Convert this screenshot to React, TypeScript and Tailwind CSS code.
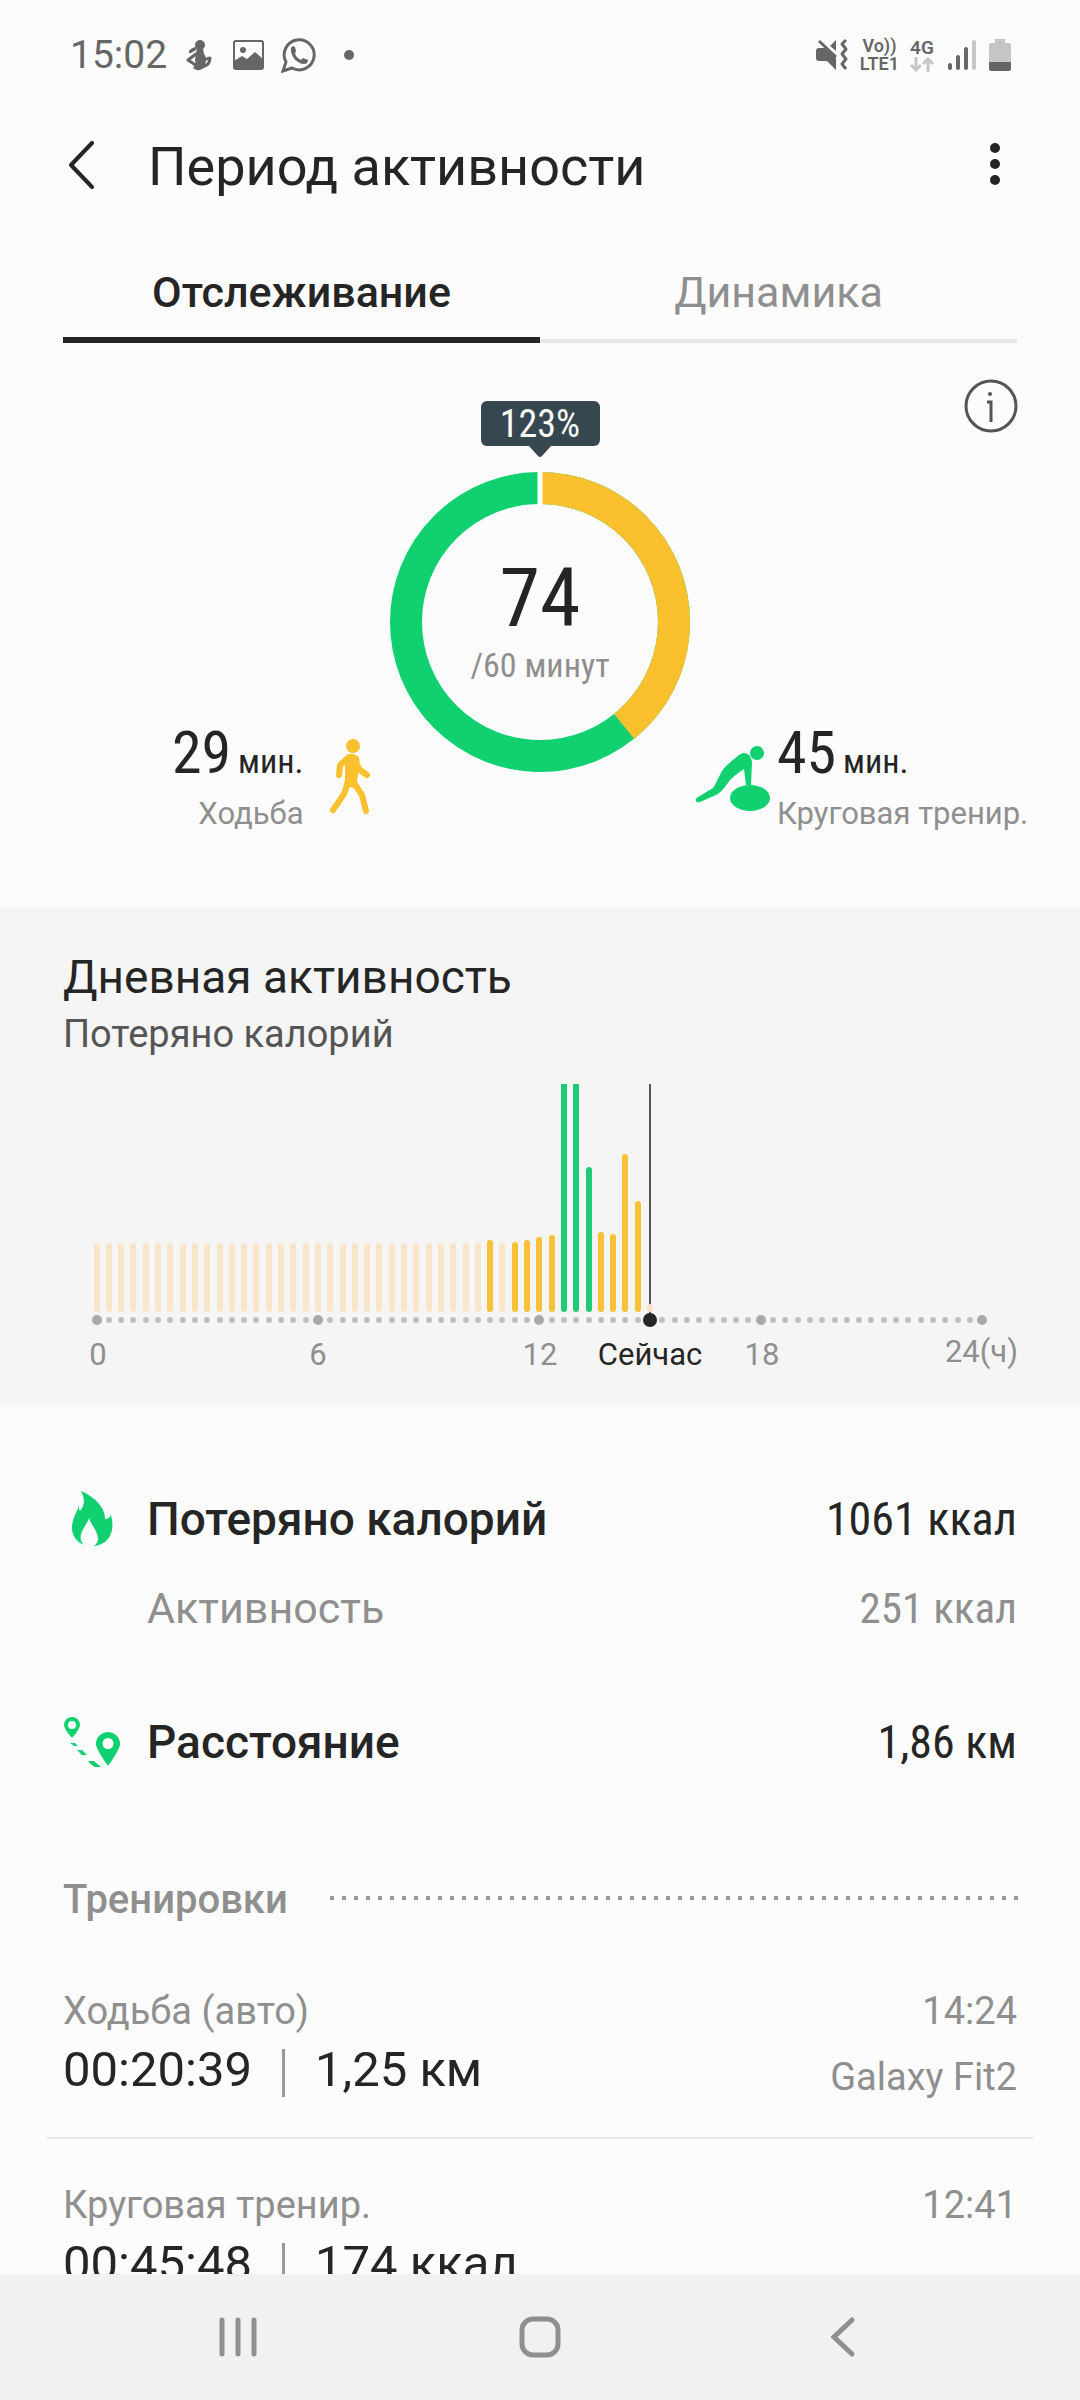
const GREEN = "#10d070";
const YELLOW = "#fbc02d";

// 20 minute slots with activity: bar top and colour
const activeBars: Record<number, [number, string]> = {
  32: [156, "#f8c138"],
  34: [158, "#f8c138"],
  35: [156, "#f8c138"],
  36: [153, "#f8c138"],
  37: [151, "#f8c138"],
  38: [0, "#1ecb74"],
  39: [0, "#1ecb74"],
  40: [83, "#1ecb74"],
  41: [148, "#f8c138"],
  42: [150, "#f8c138"],
  43: [70, "#f8c138"],
  44: [117, "#f8c138"],
};

const NOW = 45;
const slotX = (i: number) => Math.floor(97 + i * 12.3);

const workouts = [
  { name: "Ходьба (авто)", time: "14:24", duration: "00:20:39", value: "1,25 км", device: "Galaxy Fit2" },
  { name: "Круговая тренир.", time: "12:41", duration: "00:45:48", value: "174 ккал", device: "" },
];

function StatusBar() {
  return (
    <div className="flex h-[110px] shrink-0 items-center justify-between pl-[70px] pr-[69px] text-[#666]">
      <div className="flex items-center">
        <span className="text-[39px] leading-[48px]">15:02</span>
        <svg className="ml-[19px]" width="27" height="32" viewBox="0 0 27 32">
          <g fill="currentColor">
            <circle cx="14" cy="6" r="5" />
            <path d="M3 12q3-4 8-4l-1 3-5 3q-3 0-2-2z" />
            <path d="M11 9h6l1 6c3 3 2 8 1 11-1 5-8 7-12 3 2-2 3-5 2-8l1-7z" />
          </g>
          <path d="M10 15l-8 6 9 6M16 28c5-1 8-4 8-9l-3 1" fill="none" stroke="currentColor" strokeWidth="3" strokeLinecap="round" strokeLinejoin="round" />
        </svg>
        <svg className="ml-[20px]" width="31" height="30" viewBox="0 0 31 30">
          <rect x="1" y="1" width="29" height="28" rx="2" fill="none" stroke="currentColor" strokeWidth="2" />
          <circle cx="10" cy="10" r="3" fill="currentColor" />
          <path d="M1 21l8-5 5 3 8-7 8 7v10H1z" fill="currentColor" />
        </svg>
        <svg className="ml-[17px]" width="36" height="36" viewBox="0 0 36 36">
          <path d="M2 34l3-9a15 15 0 1 1 6 6z" fill="none" stroke="currentColor" strokeWidth="3" />
          <path d="M10 11c1-2 3-2 4-1l1 4-1 3c1 3 4 5 6 6l2-2 5 2c0 3-2 4-4 4-6 0-14-7-13-16z" fill="currentColor" />
        </svg>
        <span className="ml-[27px] size-[10px] rounded-full bg-[#666]" />
      </div>
      <div className="flex items-center">
        <svg width="34" height="34" viewBox="0 0 34 34">
          <path d="M3 10h6l11 10v12l-9-9H3q-3 0-3-3v-7q0-3 3-3zM14 8l6-6v11z" fill="currentColor" />
          <path d="M3 3l17 16" stroke="currentColor" strokeWidth="3" />
          <path d="M30 2l-4 4 4 5-4 5 4 5-4 5 4 5" fill="none" stroke="currentColor" strokeWidth="3" strokeLinejoin="round" />
        </svg>
        <div className="ml-[10px] text-center text-[18px] leading-[18px] font-semibold">
          <div>Vo))</div>
          <div>LTE1</div>
        </div>
        <div className="ml-[11px] flex flex-col items-center text-[19px] leading-[19px] font-semibold">
          4G
          <svg width="24" height="16" viewBox="0 0 24 16" fill="none" stroke="#c6c6c6" strokeWidth="3">
            <path d="M6 0v13M1 8l5 5 5-5M18 15V2M13 7l5-5 5 5" />
          </svg>
        </div>
        <svg className="ml-[14px]" width="28" height="32" viewBox="0 0 28 32" strokeWidth="4" strokeLinecap="round" stroke="currentColor">
          <path d="M2 26v3M10 18v11M18 10v19" />
          <path d="M26 3v26" stroke="#c6c6c6" />
        </svg>
        <svg className="ml-[13px]" width="22" height="34" viewBox="0 0 22 34">
          <path d="M6 1h10v4h4q2 0 2 2v17H0V7q0-2 2-2h4z" fill="#c6c6c6" />
          <path d="M0 24h22v7q0 2-2 2H2q-2 0-2-2z" fill="currentColor" />
        </svg>
      </div>
    </div>
  );
}

function ActivityRing() {
  const r = 134;
  const length = 2 * Math.PI * r;
  return (
    <svg width="300" height="300" viewBox="0 0 300 300" fill="none" strokeWidth="32">
      <circle cx="150" cy="150" r={r} stroke={GREEN} />
      <circle
        cx="150"
        cy="150"
        r={r}
        stroke={YELLOW}
        strokeDasharray={`${(length * 29) / 74} ${length}`}
        transform="rotate(-90 150 150)"
      />
      <path d="M150 0v34" stroke="#fcfcfc" strokeWidth="5" />
    </svg>
  );
}

function WalkIcon() {
  return (
    <svg className="mt-[20px] ml-[26px]" width="40" height="76" viewBox="0 0 40 76" fill={YELLOW}>
      <circle cx="23" cy="7" r="7" />
      <path d="M15 18q7-6 14 0 1 7 0 12l-2 12 2 8-9-2-7 2 2-10V28z" />
      <path d="M19 18l-9 8-1 10M27 26l3 5 7 5M18 44l-4 11L3 71M24 44l8 12 4 16" fill="none" stroke={YELLOW} strokeWidth="6" strokeLinecap="round" strokeLinejoin="round" />
    </svg>
  );
}

function CircuitIcon() {
  return (
    <svg className="mt-[26px] mr-[7px]" width="74" height="68" viewBox="0 0 74 68" fill={GREEN}>
      <circle cx="61" cy="8" r="7" />
      <path d="M2 52l15-9c2-2 4-8 9-17q3-5 17-16 5-4 10 0 3 3 3 7l-1 23h-5l-2-16q-9 6-14 11c-5 7-8 11-12 14L4 57q-3 1-4-1-1-2 2-4z" />
      <ellipse cx="54" cy="53" rx="20" ry="13" />
    </svg>
  );
}

function CaloriesChart() {
  return (
    <svg className="block w-full" viewBox="0 0 1080 300" role="img" aria-label="Потеряно калорий">
      {Array.from({ length: NOW }, (_, i) => {
        const [top, color] = activeBars[i] ?? [159, "#f9e5ca"];
        const x = slotX(i) - 3;
        return top === 0 ? (
          <path key={i} d={`M${x} 0h6v225a3 3 0 0 1-6 0z`} fill={color} />
        ) : (
          <rect key={i} x={x} y={top} width="6" height={228 - top} rx="3" fill={color} />
        );
      })}
      <path d={`M${slotX(NOW)} 0v236`} stroke="#555" strokeWidth="2" />
      <rect x={slotX(NOW) - 3} y="220" width="6" height="8" rx="3" fill="#fbe0cc" />
      {Array.from({ length: 73 }, (_, i) => (
        <circle key={i} cx={slotX(i)} cy="236" r={i % 18 === 0 ? 5 : 3} fill={i % 18 === 0 ? "#a9a9a9" : "#bfbfbf"} />
      ))}
      <circle cx={slotX(NOW)} cy="236" r="7" fill="#252525" />
      <g fontSize="31" fill="#8f8f8f" textAnchor="middle">
        <text x="98" y="281">0</text>
        <text x="318" y="281">6</text>
        <text x="540" y="281">12</text>
        <text x="650" y="281" fill="#252525">Сейчас</text>
        <text x="762" y="281">18</text>
        <text x="1018" y="278" textAnchor="end">24(ч)</text>
      </g>
    </svg>
  );
}

export default function App() {
  return (
    <div className="flex h-screen flex-col bg-[#fcfcfc] font-['Roboto',sans-serif] text-[#252525]">
      <StatusBar />

      <header className="flex h-[112px] shrink-0 items-center pl-[60px] pr-[79px]">
        <button aria-label="Назад" className="w-[88px]">
          <svg width="44" height="50" viewBox="0 0 44 50" fill="none" stroke="currentColor" strokeWidth="4" strokeLinecap="round" strokeLinejoin="round">
            <path d="M32 2L11 24l21 22" />
          </svg>
        </button>
        <h1 className="flex-1 pt-[2px] text-[54px] leading-[64px]">Период активности</h1>
        <button aria-label="Ещё">
          <svg width="12" height="48" viewBox="0 0 12 48" fill="currentColor">
            <circle cx="6" cy="6" r="5" />
            <circle cx="6" cy="22" r="5" />
            <circle cx="6" cy="38" r="5" />
          </svg>
        </button>
      </header>

      <main className="flex-1 overflow-hidden">
        <div role="tablist" className="mx-[63px] flex h-[121px] text-[43px]">
          <button role="tab" aria-selected="true" className="flex-1 border-b-6 border-[#252525] pt-[26px] font-medium">
            Отслеживание
          </button>
          <button role="tab" aria-selected="false" className="flex flex-1 flex-col">
            <span className="flex w-full flex-1 items-center justify-center pt-[24px] text-[#8f8f8f]">Динамика</span>
            <span className="h-[4px] w-full bg-[#e6e6e6]" />
          </button>
        </div>

        <section className="relative flex h-[564px] flex-col items-center pt-[58px]">
          <button aria-label="Информация" className="absolute top-[36px] right-[62px]">
            <svg width="54" height="54" viewBox="0 0 54 54" fill="none" stroke="#555" strokeWidth="3">
              <circle cx="27" cy="27" r="25" />
              <path d="M23 23h4v20" />
              <circle cx="26" cy="15" r="2" fill="#555" strokeWidth="0" />
            </svg>
          </button>
          <div className="flex h-[45px] w-[119px] items-center justify-center rounded-md bg-[#37474f] font-['Roboto_Condensed','Roboto',sans-serif] text-[38px] leading-[44px] text-[#fcfcfc]">
            123%
          </div>
          <svg width="22" height="11" viewBox="0 0 22 11" fill="#37474f">
            <path d="M0 0h22l-9 10q-2 2-4 0z" />
          </svg>
          <div className="relative mt-[15px]">
            <ActivityRing />
            <div className="absolute inset-0 flex flex-col items-center pt-[79px] font-['Roboto_Condensed','Roboto',sans-serif]">
              <span className="text-[82px] leading-[94px]">74</span>
              <span className="text-[34px] leading-[40px] text-[#8f8f8f]">/60 минут</span>
            </div>
          </div>
          <div className="absolute top-[376px] flex w-full">
            <div className="flex w-1/2 pl-[172px]">
              <div className="text-right">
                <p className="font-['Roboto_Condensed','Roboto',sans-serif] text-[60px] leading-[68px]">
                  29 <span className="-ml-[7px] text-[34px]">мин.</span>
                </p>
                <p className="text-[31px] leading-[38px] text-[#8f8f8f]">Ходьба</p>
              </div>
              <WalkIcon />
            </div>
            <div className="flex w-1/2 pl-[156px]">
              <CircuitIcon />
              <div>
                <p className="font-['Roboto_Condensed','Roboto',sans-serif] text-[60px] leading-[68px]">
                  45 <span className="-ml-[7px] text-[34px]">мин.</span>
                </p>
                <p className="text-[31px] leading-[38px] text-[#8f8f8f]">Круговая тренир.</p>
              </div>
            </div>
          </div>
        </section>

        <section className="h-[500px] bg-[#f5f5f5] pt-[42px]">
          <h2 className="px-[63px] text-[46px] leading-[56px]">Дневная активность</h2>
          <p className="px-[63px] text-[38px] leading-[58px] text-[#555]">Потеряно калорий</p>
          <div className="mt-[21px]">
            <CaloriesChart />
          </div>
        </section>

        <section className="px-[63px] pt-[85px]">
          <div className="flex h-[54px] items-center text-[46px]">
            <svg className="mr-[34px] ml-[9px]" width="41" height="56" viewBox="0 0 41 56" fill={GREEN}>
              <path d="M9 0c9 4 17 10 21 17 2 4 3 7 3 11 3 0 5-2 6-4 1 4 2 9 1 15-2 9-8 15-18 16 4-3 5-7 3-12-2-6-6-10-8-16-2 6-6 10-8 16-1 5 0 8 3 11C5 51 0 45 0 37 0 27 5 22 7 14c0 3 0 5 1 6 5-6 5-12 1-20z" />
            </svg>
            <h3 className="flex-1 font-medium">Потеряно калорий</h3>
            <span className="font-['Roboto_Condensed','Roboto',sans-serif]">1061 ккал</span>
          </div>
          <div className="mt-[35px] flex h-[54px] items-center justify-between pl-[84px] text-[43px] text-[#8f8f8f]">
            <span>Активность</span>
            <span className="font-['Roboto_Condensed','Roboto',sans-serif]">251 ккал</span>
          </div>
          <div className="mt-[80px] flex h-[54px] items-center text-[46px]">
            <svg className="mr-[27px]" width="57" height="50" viewBox="0 0 57 50" fill={GREEN}>
              <path fillRule="evenodd" d="M9 0a8 8 0 0 1 8 8q0 4-8 13Q1 12 1 8a8 8 0 0 1 8-8zM9 4a4 4 0 1 0 0 8 4 4 0 0 0 0-8z" />
              <path fillRule="evenodd" d="M45 15a12 12 0 0 1 12 12q0 5-12 22Q33 32 33 27a12 12 0 0 1 12-12zM45 21a5 5 0 1 0 0 11 5 5 0 0 0 0-11z" />
              <path d="M7 26h5l3 3h-4zM14 33h5l5 5h-5zM25 44h6l7 6h-6q-4-2-7-6z" />
            </svg>
            <h3 className="flex-1 font-medium">Расстояние</h3>
            <span className="font-['Roboto_Condensed','Roboto',sans-serif]">1,86 км</span>
          </div>
        </section>

        <section className="pt-[107px]">
          <div className="flex items-center pl-[63px] pr-[60px]">
            <h3 className="text-[40px] leading-[48px] font-medium text-[#8f8f8f]">Тренировки</h3>
            <svg className="mb-[4px] ml-[42px] h-[4px] flex-1">
              <line x1="0" y1="2" x2="100%" y2="2" stroke="#999" strokeWidth="4" strokeDasharray="4 8" />
            </svg>
          </div>
          <ul className="mx-[47px] mt-[21px] divide-y-2 divide-[#e6e6e6]">
            {workouts.map((w) => (
              <li key={w.time} className="flex h-[194px] justify-between px-[16px] pt-[43px]">
                <div>
                  <p className="text-[38px] leading-[46px] text-[#8f8f8f]">{w.name}</p>
                  <p className="flex items-center text-[49px] leading-[72px]">
                    {w.duration}
                    <span className="mx-[30px] mt-[6px] h-[48px] w-[3px] bg-[#999]" />
                    {w.value}
                  </p>
                </div>
                <div className="text-right text-[38px] leading-[46px] text-[#8f8f8f]">
                  <p>{w.time}</p>
                  <p className="mt-[20px]">{w.device}</p>
                </div>
              </li>
            ))}
          </ul>
        </section>
      </main>

      <nav className="flex h-[126px] shrink-0 items-center justify-between bg-[#f1f1f1] px-[217px] text-[#8f8f8f]">
        <button aria-label="Недавние">
          <svg width="42" height="42" viewBox="0 0 42 42" stroke="currentColor" strokeWidth="5" strokeLinecap="round">
            <path d="M5 4v34M21 4v34M37 4v34" />
          </svg>
        </button>
        <button aria-label="Главная">
          <svg width="42" height="42" viewBox="0 0 42 42" fill="none" stroke="currentColor" strokeWidth="5">
            <rect x="3" y="3" width="36" height="36" rx="11" />
          </svg>
        </button>
        <button aria-label="Назад">
          <svg width="42" height="42" viewBox="0 0 42 42" fill="none" stroke="currentColor" strokeWidth="5" strokeLinecap="round">
            <path d="M31 4L13 21l18 17" />
          </svg>
        </button>
      </nav>
    </div>
  );
}
